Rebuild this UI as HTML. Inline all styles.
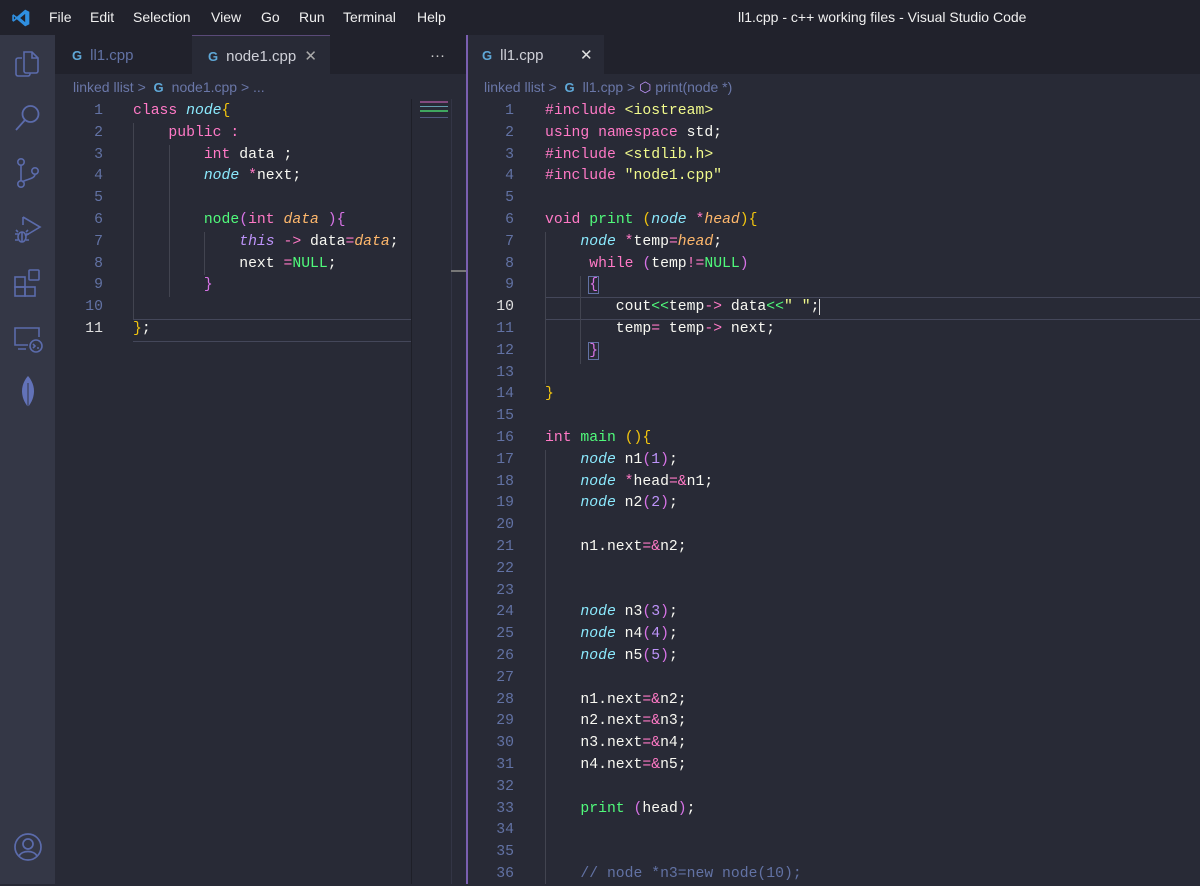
<!DOCTYPE html>
<html><head><meta charset="utf-8"><style>
*{margin:0;padding:0;box-sizing:border-box}
body{width:1200px;height:884px;overflow:hidden;background:#282a36;font-family:"Liberation Sans",sans-serif;position:relative}
.abs{position:absolute}
#title{left:0;top:0;width:1200px;height:35px;background:#21222c;color:#f0f0f0;font-size:14px}
#title span{position:absolute;top:9px}
#act{left:0;top:35px;width:55px;height:849px;background:#343746}
.tabbar{top:35px;height:39px;background:#21222c}
.tab{position:absolute;top:0;height:39px;font-size:15px;line-height:41px;color:#6272a4}
.tab.on{background:#282a36;color:#cfd0d8}
.ci{color:#5fa8d8;font-weight:bold;font-size:13px;margin-right:8px}
.bc{top:79px;font-size:14px;color:#6a77a8;white-space:pre}
.code{font-family:"Liberation Mono",monospace;font-size:14.75px;white-space:pre;color:#f8f8f2}
.ln{position:absolute;height:21.8px;line-height:21.8px}
.num{color:#6272a4;text-align:right;width:40px}
.k{color:#ff79c6}.t{color:#8be9fd;font-style:italic}.f{color:#50fa7b}.o{color:#ffb86c;font-style:italic}
.s{color:#f1fa8c}.p{color:#d773e6}.y{color:#f1c40f}.c{color:#6272a4}.n{color:#bd93f9}.th{color:#bd93f9;font-style:italic}
.box{outline:1px solid #6272a4}
.guide{position:absolute;width:1px;background:#424450}
</style></head><body>
<div id="title" class="abs">
<svg class="abs" style="left:11px;top:8px" width="20" height="20" viewBox="0 0 24 24"><path d="M17 2 L22 4.5 V19.5 L17 22 L7 13.5 L3 16.5 L1.5 15.5 V8.5 L3 7.5 L7 10.5 Z M17 7 L11 12 L17 17 Z M3.5 10 V14 L5.5 12 Z" fill="#2f8fe0"/></svg>
<span style="left:49px">File</span><span style="left:90px">Edit</span><span style="left:133px">Selection</span><span style="left:211px">View</span><span style="left:261px">Go</span><span style="left:299px">Run</span><span style="left:343px">Terminal</span><span style="left:417px">Help</span>
<span style="left:738px">ll1.cpp - c++ working files - Visual Studio Code</span>
</div>
<div id="act" class="abs">
<svg class="abs" style="left:14px;top:13px" width="28" height="32" viewBox="0 0 28 32" fill="none" stroke="#5b6bab" stroke-width="1.6"><path d="M10 4h8l6 6v13a2 2 0 0 1-2 2h-10a2 2 0 0 1-2-2z M18 4v6h6"/><path d="M8 10h-4a2 2 0 0 0-2 2v14a2 2 0 0 0 2 2h10a2 2 0 0 0 2-2v-1"/></svg>
<svg class="abs" style="left:14px;top:67px" width="28" height="32" viewBox="0 0 28 32" fill="none" stroke="#5b6bab" stroke-width="1.8"><circle cx="16.5" cy="12" r="8"/><path d="M11 18 L2 28"/></svg>
<svg class="abs" style="left:14px;top:122px" width="28" height="34" viewBox="0 0 28 34" fill="none" stroke="#5b6bab" stroke-width="1.6"><circle cx="7" cy="5" r="3.2"/><circle cx="7" cy="27" r="3.2"/><circle cx="21" cy="14" r="3.2"/><path d="M7 8v16 M21 17c0 5-8 5-13 8"/></svg>
<svg class="abs" style="left:12px;top:180px" width="32" height="30" viewBox="0 0 32 30" fill="none" stroke="#5b6bab" stroke-width="1.6"><path d="M11 2 L28 12 L13 21 M11 2 V10"/><ellipse cx="10" cy="22" rx="4" ry="5"/><path d="M3 19h3 M3 25h3 M14 19h3 M14 25h3 M6 17l-2-2 M14 17l2-2 M10 17v10"/></svg>
<svg class="abs" style="left:12px;top:233px" width="32" height="32" viewBox="0 0 32 32" fill="none" stroke="#5b6bab" stroke-width="1.6"><rect x="3" y="9" width="10" height="10"/><rect x="3" y="19" width="10" height="9"/><rect x="13" y="19" width="10" height="9"/><rect x="17" y="2" width="10" height="10" rx="1"/></svg>
<svg class="abs" style="left:12px;top:290px" width="32" height="30" viewBox="0 0 32 30" fill="none" stroke="#5b6bab" stroke-width="1.6"><path d="M16 20H3V3h24v9 M6 24h8"/><circle cx="24" cy="21" r="6"/><path d="M21 19l2 2-2 2 M25 23h2"/></svg>
<svg class="abs" style="left:18px;top:340px" width="20" height="36" viewBox="0 0 20 36"><path d="M10 1 C2 10 2 22 10 32 C18 22 18 10 10 1Z" fill="#6272b8"/><path d="M10 8 V35" stroke="#343746" stroke-width="1"/></svg>
<svg class="abs" style="left:13px;top:797px" width="30" height="30" viewBox="0 0 30 30" fill="none" stroke="#5b6bab" stroke-width="1.7"><circle cx="15" cy="15" r="13"/><circle cx="15" cy="12" r="5"/><path d="M6 24c3-6 15-6 18 0"/></svg>
</div>

<!-- left group -->
<div class="abs tabbar" style="left:55px;width:411px">
<div class="tab" style="left:17px;width:120px;"><span class="ci">G</span>ll1.cpp</div>
<div class="tab on" style="left:137px;width:138px;padding-left:16px;border-top:1px solid #5a4a78"><span class="ci">G</span>node1.cpp <span style="margin-left:4px;color:#aaa">✕</span></div>
<div class="tab" style="left:375px;color:#ccc">···</div>
</div>
<div class="abs bc" style="left:73px">linked llist &gt;  <span class="ci">G</span>node1.cpp &gt; ...</div>
<div class="abs" style="left:411px;top:99px;width:40px;height:785px;background:#282a36;border-left:1px solid #1e1f28"></div>
<div class="abs" style="left:451px;top:99px;width:15px;height:785px;background:#282a36;border-left:1px solid #333545"></div>
<div class="abs" style="left:451px;top:270px;width:15px;height:2px;background:#777"></div>
<div class="abs" style="left:420px;top:101px;width:28px;height:18px;opacity:.6;background:linear-gradient(#c060b0 0 2px,transparent 2px 5px,#8be9fd 5px 6px,transparent 6px 9px,#50fa7b 9px 11px,transparent 11px 16px,#6c7ab0 16px 17px,transparent 17px)"></div>
<div class="abs" style="left:133px;top:319px;width:278px;height:23px;border-top:1px solid #44475a;border-bottom:1px solid #44475a"></div>
<div class="guide" style="left:133px;top:123px;height:196px"></div>
<div class="guide" style="left:169px;top:145px;height:152px"></div>
<div class="guide" style="left:204px;top:232px;height:43px"></div>
<div class="abs code" style="left:55px;top:101px">
<div class="ln num" style="top:0;left:8px">1</div><div class="ln" style="top:0;left:78px"><span class="k">class</span> <span class="t">node</span><span class="y">{</span></div>
<div class="ln num" style="top:21.8px;left:8px">2</div><div class="ln" style="top:21.8px;left:78px">    <span class="k">public :</span></div>
<div class="ln num" style="top:43.6px;left:8px">3</div><div class="ln" style="top:43.6px;left:78px">        <span class="k">int</span> data ;</div>
<div class="ln num" style="top:65.4px;left:8px">4</div><div class="ln" style="top:65.4px;left:78px">        <span class="t">node</span> <span class="k">*</span>next;</div>
<div class="ln num" style="top:87.2px;left:8px">5</div>
<div class="ln num" style="top:109px;left:8px">6</div><div class="ln" style="top:109px;left:78px">        <span class="f">node</span><span class="p">(</span><span class="k">int</span> <span class="o">data</span> <span class="p">){</span></div>
<div class="ln num" style="top:130.8px;left:8px">7</div><div class="ln" style="top:130.8px;left:78px">            <span class="th">this</span> <span class="k">-&gt;</span> data<span class="k">=</span><span class="o">data</span>;</div>
<div class="ln num" style="top:152.6px;left:8px">8</div><div class="ln" style="top:152.6px;left:78px">            next <span class="k">=</span><span class="f">NULL</span>;</div>
<div class="ln num" style="top:174.4px;left:8px">9</div><div class="ln" style="top:174.4px;left:78px">        <span class="p">}</span></div>
<div class="ln num" style="top:196.2px;left:8px">10</div>
<div class="ln num" style="top:218px;left:8px;color:#e0e0e0">11</div><div class="ln" style="top:218px;left:78px"><span class="y">}</span>;</div>
</div>

<!-- divider -->
<div class="abs" style="left:466px;top:35px;width:2px;height:849px;background:#7a5fb0"></div>

<!-- right group -->
<div class="abs tabbar" style="left:468px;width:732px">
<div class="tab on" style="left:0;width:136px;padding-left:14px"><span class="ci">G</span>ll1.cpp<span style="position:absolute;left:112px;color:#e0e0e0">✕</span></div>
</div>
<div class="abs bc" style="left:484px">linked llist &gt;  <span class="ci">G</span>ll1.cpp &gt; <span style="color:#bd93f9">⬡</span> print(node *)</div>
<div class="abs" style="left:545px;top:297px;width:655px;height:23px;border-top:1px solid #44475a;border-bottom:1px solid #44475a;border-left:1px solid #44475a"></div>
<div class="guide" style="left:545px;top:232px;height:152px"></div>
<div class="guide" style="left:545px;top:450px;height:434px"></div>
<div class="guide" style="left:580px;top:276px;height:88px"></div>
<div class="abs code" style="left:468px;top:101px">
<div class="ln num" style="top:0;left:6px">1</div><div class="ln" style="top:0;left:77px"><span class="k">#include</span> <span class="s">&lt;iostream&gt;</span></div>
<div class="ln num" style="top:21.8px;left:6px">2</div><div class="ln" style="top:21.8px;left:77px"><span class="k">using namespace</span> std;</div>
<div class="ln num" style="top:43.6px;left:6px">3</div><div class="ln" style="top:43.6px;left:77px"><span class="k">#include</span> <span class="s">&lt;stdlib.h&gt;</span></div>
<div class="ln num" style="top:65.4px;left:6px">4</div><div class="ln" style="top:65.4px;left:77px"><span class="k">#include</span> <span class="s">"node1.cpp"</span></div>
<div class="ln num" style="top:87.2px;left:6px">5</div>
<div class="ln num" style="top:109px;left:6px">6</div><div class="ln" style="top:109px;left:77px"><span class="k">void</span> <span class="f">print</span> <span class="y">(</span><span class="t">node</span> <span class="k">*</span><span class="o">head</span><span class="y">){</span></div>
<div class="ln num" style="top:130.8px;left:6px">7</div><div class="ln" style="top:130.8px;left:77px">    <span class="t">node</span> <span class="k">*</span>temp<span class="k">=</span><span class="o">head</span>;</div>
<div class="ln num" style="top:152.6px;left:6px">8</div><div class="ln" style="top:152.6px;left:77px">     <span class="k">while</span> <span class="p">(</span>temp<span class="k">!=</span><span class="f">NULL</span><span class="p">)</span></div>
<div class="ln num" style="top:174.4px;left:6px">9</div><div class="ln" style="top:174.4px;left:77px">     <span class="p box">{</span></div>
<div class="ln num" style="top:196.2px;left:6px;color:#e0e0e0">10</div><div class="ln" style="top:196.2px;left:77px">        cout<span class="f">&lt;&lt;</span>temp<span class="k">-&gt;</span> data<span class="f">&lt;&lt;</span><span class="s">" "</span>;<span style="border-right:1px solid #ddd"></span></div>
<div class="ln num" style="top:218px;left:6px">11</div><div class="ln" style="top:218px;left:77px">        temp<span class="k">=</span> temp<span class="k">-&gt;</span> next;</div>
<div class="ln num" style="top:239.8px;left:6px">12</div><div class="ln" style="top:239.8px;left:77px">     <span class="p box">}</span></div>
<div class="ln num" style="top:261.6px;left:6px">13</div>
<div class="ln num" style="top:283.4px;left:6px">14</div><div class="ln" style="top:283.4px;left:77px"><span class="y">}</span></div>
<div class="ln num" style="top:305.2px;left:6px">15</div>
<div class="ln num" style="top:327px;left:6px">16</div><div class="ln" style="top:327px;left:77px"><span class="k">int</span> <span class="f">main</span> <span class="y">(){</span></div>
<div class="ln num" style="top:348.8px;left:6px">17</div><div class="ln" style="top:348.8px;left:77px">    <span class="t">node</span> n1<span class="p">(</span><span class="n">1</span><span class="p">)</span>;</div>
<div class="ln num" style="top:370.6px;left:6px">18</div><div class="ln" style="top:370.6px;left:77px">    <span class="t">node</span> <span class="k">*</span>head<span class="k">=&amp;</span>n1;</div>
<div class="ln num" style="top:392.4px;left:6px">19</div><div class="ln" style="top:392.4px;left:77px">    <span class="t">node</span> n2<span class="p">(</span><span class="n">2</span><span class="p">)</span>;</div>
<div class="ln num" style="top:414.2px;left:6px">20</div>
<div class="ln num" style="top:436px;left:6px">21</div><div class="ln" style="top:436px;left:77px">    n1.next<span class="k">=&amp;</span>n2;</div>
<div class="ln num" style="top:457.8px;left:6px">22</div>
<div class="ln num" style="top:479.6px;left:6px">23</div>
<div class="ln num" style="top:501.4px;left:6px">24</div><div class="ln" style="top:501.4px;left:77px">    <span class="t">node</span> n3<span class="p">(</span><span class="n">3</span><span class="p">)</span>;</div>
<div class="ln num" style="top:523.2px;left:6px">25</div><div class="ln" style="top:523.2px;left:77px">    <span class="t">node</span> n4<span class="p">(</span><span class="n">4</span><span class="p">)</span>;</div>
<div class="ln num" style="top:545px;left:6px">26</div><div class="ln" style="top:545px;left:77px">    <span class="t">node</span> n5<span class="p">(</span><span class="n">5</span><span class="p">)</span>;</div>
<div class="ln num" style="top:566.8px;left:6px">27</div>
<div class="ln num" style="top:588.6px;left:6px">28</div><div class="ln" style="top:588.6px;left:77px">    n1.next<span class="k">=&amp;</span>n2;</div>
<div class="ln num" style="top:610.4px;left:6px">29</div><div class="ln" style="top:610.4px;left:77px">    n2.next<span class="k">=&amp;</span>n3;</div>
<div class="ln num" style="top:632.2px;left:6px">30</div><div class="ln" style="top:632.2px;left:77px">    n3.next<span class="k">=&amp;</span>n4;</div>
<div class="ln num" style="top:654px;left:6px">31</div><div class="ln" style="top:654px;left:77px">    n4.next<span class="k">=&amp;</span>n5;</div>
<div class="ln num" style="top:675.8px;left:6px">32</div>
<div class="ln num" style="top:697.6px;left:6px">33</div><div class="ln" style="top:697.6px;left:77px">    <span class="f">print</span> <span class="p">(</span>head<span class="p">)</span>;</div>
<div class="ln num" style="top:719.4px;left:6px">34</div>
<div class="ln num" style="top:741.2px;left:6px">35</div>
<div class="ln num" style="top:763px;left:6px">36</div><div class="ln" style="top:763px;left:77px">    <span class="c">// node *n3=new node(10);</span></div>
</div>
</body></html>
